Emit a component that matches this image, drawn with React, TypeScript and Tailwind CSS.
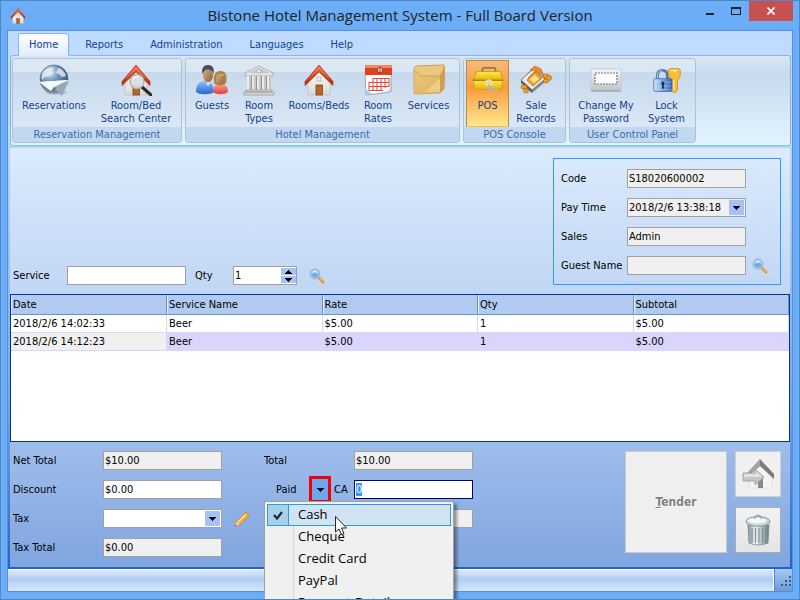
import { useEffect, useRef, useState } from "react";
import type { ReactNode } from "react";

interface RibbonItem {
  label: string[];
  icon: ReactNode;
  width: string;
}

interface RibbonGroup {
  title: string;
  items: RibbonItem[];
}

function GlobeIcon() {
  return (
    <svg viewBox="0 0 32 32" className="size-8">
      <defs>
        <radialGradient id="globe" cx="0.35" cy="0.25" r="0.8">
          <stop offset="0" stopColor="#dfeaf3" />
          <stop offset="0.45" stopColor="#6690b8" />
          <stop offset="1" stopColor="#2a4b73" />
        </radialGradient>
        <linearGradient id="plane" x1="0" y1="0" x2="1" y2="1">
          <stop offset="0" stopColor="#ffffff" />
          <stop offset="1" stopColor="#b9c6cc" />
        </linearGradient>
      </defs>
      <ellipse cx="18" cy="28" rx="11" ry="3" fill="#6b7785" opacity="0.3" />
      <circle cx="16" cy="15" r="14" fill="url(#globe)" stroke="#3a5877" strokeWidth="0.6" />
      <path d="M4 21q4 8 12 8 5 0 9-3l-8-6z" fill="#7d8b98" />
      <path d="M7 6c3-3 7-3 9-2l-2 3 2 2-4 3-5 1-3 3c-1-4 0-8 3-10zM20 4c4 1 7 4 8 8l-4 1-3-3-3-1z" fill="#e3ecf2" opacity="0.8" />
      <path d="M1 18 31 16 24 32 16 23z" fill="url(#plane)" />
      <path d="M1 18 31 16 16 23 13 27z" fill="#f8fbfc" />
      <path d="M16 23 31 16 24 32z" fill="#94a9b5" />
      <path d="M16 23 13 28 18 25z" fill="#5f6e79" />
    </svg>
  );
}

function HouseShape() {
  return (
    <>
      <defs>
        <linearGradient id="roof" x1="0" y1="0" x2="0" y2="1">
          <stop offset="0" stopColor="#f0623a" />
          <stop offset="1" stopColor="#b32708" />
        </linearGradient>
        <linearGradient id="wall" x1="0" y1="0" x2="0" y2="1">
          <stop offset="0" stopColor="#ffffff" />
          <stop offset="1" stopColor="#d8d8d6" />
        </linearGradient>
      </defs>
      <path d="M5 17 16 6l11 11v14H5z" fill="url(#wall)" stroke="#b8b8b8" strokeWidth="0.6" />
      <rect x="13" y="21" width="6.500" height="10" fill="#b5682a" stroke="#7e4316" strokeWidth="0.8" />
      <rect x="14" y="13" width="4" height="4" fill="#e8eef4" stroke="#a7a7a7" strokeWidth="0.7" />
      <path d="M16 1 30 17.500v4L16 8 2 21.500v-4z" fill="url(#roof)" stroke="#a32a0e" strokeWidth="0.6" />
      <path d="M16 2.500 28.500 17 16 5.500 3.500 17z" fill="#ff9067" opacity="0.6" />
    </>
  );
}

function HouseIcon({ className = "size-8" }: { className?: string }) {
  return (
    <svg viewBox="0 0 32 32" className={className}>
      <HouseShape />
    </svg>
  );
}

function HouseSearchIcon() {
  return (
    <svg viewBox="0 0 32 32" className="size-8">
      <HouseShape />
      <path d="m22 23 9 8" stroke="#2b2b2b" strokeWidth="3.200" strokeLinecap="round" />
      <circle cx="17" cy="17.500" r="7" fill="#d9e0e5" fillOpacity="0.95" stroke="#a9b0b5" strokeWidth="1.400" />
      <path d="M12 16a5.500 5.500 0 0 1 8-3.500c-3 0-6 1-8 3.500z" fill="#fff" />
    </svg>
  );
}

function GuestsIcon() {
  return (
    <svg viewBox="0 0 32 32" className="size-8">
      <defs>
        <linearGradient id="shirt" x1="0" y1="0" x2="0" y2="1">
          <stop offset="0" stopColor="#8ec1fb" />
          <stop offset="1" stopColor="#2464d4" />
        </linearGradient>
        <linearGradient id="blouse" x1="0" y1="0" x2="0" y2="1">
          <stop offset="0" stopColor="#ff9d94" />
          <stop offset="1" stopColor="#e03c3c" />
        </linearGradient>
        <linearGradient id="skin" x1="0" y1="0" x2="1" y2="1">
          <stop offset="0" stopColor="#d9b184" />
          <stop offset="1" stopColor="#8d633c" />
        </linearGradient>
      </defs>
      <path d="M0 28c0-7 3-11 9-11s9 4 9 11c-3 3-15 3-18 0z" fill="url(#shirt)" />
      <path d="m9 17 3 5 3-4z" fill="#dcebff" />
      <ellipse cx="12" cy="11" rx="5" ry="7.500" fill="url(#skin)" />
      <path d="M6.500 10C5 4 8 1 12 1s7 3 5.500 9c-1-3-2-4-5-4.500S8 7 6.500 10z" fill="#4a4e53" />
      <path d="M17 28c0-6 3-8 8-8s7 3 7 8c-3 3-12 3-15 0z" fill="url(#blouse)" />
      <path d="M18.500 20c-2-7 0-13 6-13s7 6 5.500 12c-3 3-8 3-11.500 1z" fill="#a98544" />
      <ellipse cx="24" cy="15.500" rx="4" ry="5.500" fill="url(#skin)" />
      <path d="M20 13c1-4 7-5 9-1-3 0-6-1-9 1z" fill="#c9a75f" />
    </svg>
  );
}

function BankIcon() {
  return (
    <svg viewBox="0 0 32 32" className="size-8">
      <path d="M2 9 16 2l14 7v3H2z" fill="#e1e1df" stroke="#a2a2a2" strokeWidth="0.8" />
      <path d="M6 9 16 4l10 5z" fill="#c4c4c2" />
      <circle cx="16" cy="7" r="1.800" fill="#f6f6f6" stroke="#999" strokeWidth="0.5" />
      <rect x="4" y="12" width="24" height="14" fill="#939393" />
      {[4, 9, 14, 19, 24].map((x) => (
        <g key={x}>
          <rect x={x} y="12" width="4" height="14" fill="#dadada" />
          <path d={`M${x + 1} 12v14`} stroke="#fafafa" />
          <path d={`M${x + 3} 12v14`} stroke="#b3b3b3" />
        </g>
      ))}
      <path d="M3 26h26v2H3zM1 28h30v3H1z" fill="#d6d6d4" stroke="#979797" strokeWidth="0.7" />
    </svg>
  );
}

function CalendarIcon() {
  return (
    <svg viewBox="0 0 32 32" className="size-8">
      <path d="M3 10h26v18L4 31z" fill="#fdfdfd" stroke="#8b9299" strokeWidth="0.8" />
      <path d="M3 2q0-1 1-1h25q1 0 1 1v9H3z" fill="#dd4120" />
      <path d="M3 2q0-1 1-1h25q1 0 1 1v2H3z" fill="#f08a62" />
      <circle cx="18" cy="6" r="2.800" fill="#f3c6b4" stroke="#8a2b12" strokeWidth="0.8" />
      <path d="M18 3v6" stroke="#8a2b12" strokeWidth="0.8" />
      <path d="M11 14.500h16M7 18.500h20M7 22.500h20M7 26.500h14M7 18v9M11 14v13M15 14v13M19 14v13M23 14v10M27 14v9" stroke="#e2473a" strokeWidth="1" fill="none" />
      <path d="m3 24 7 6-6 1z" fill="#9ed7f1" />
      <path d="M22 28c3 0 6-2 7-5v6z" fill="#c5cbd0" />
    </svg>
  );
}

function BoxIcon() {
  return (
    <svg viewBox="0 0 32 32" className="size-8">
      <defs>
        <linearGradient id="box" x1="0" y1="0" x2="1" y2="1">
          <stop offset="0" stopColor="#efca82" />
          <stop offset="1" stopColor="#dcae5a" />
        </linearGradient>
      </defs>
      <path d="M1 6q0-4 3-4l26-1q2 0 2 2l-1 22-4 4-25 1q-1 0-1-2z" fill="url(#box)" stroke="#c59a4d" strokeWidth="0.7" />
      <path d="M27 11 32 3l-1 22-4 4z" fill="#cf9f4d" />
      <path d="M1 5q1-3 3-3l26-1q2 0 1 3l-3 6q-1 2-3 2H8q-2 0-3-2L4 8H1z" fill="#ecc782" stroke="#c89a4b" strokeWidth="0.7" />
      <path d="M12 28 27 14v14z" fill="#f5db9f" opacity="0.6" />
    </svg>
  );
}

function CashBoxIcon() {
  return (
    <svg viewBox="0 0 34 32" className="h-8 w-8">
      <defs>
        <linearGradient id="cash" x1="0" y1="0" x2="0" y2="1">
          <stop offset="0" stopColor="#ffea51" />
          <stop offset="1" stopColor="#e6b400" />
        </linearGradient>
      </defs>
      <path d="M11 8V5q0-2 2-2h10q2 0 2 2v3" fill="none" stroke="#8b6f50" strokeWidth="1.800" />
      <path d="M5 7h25l3 9H1z" fill="url(#cash)" stroke="#b38a10" strokeWidth="0.7" />
      <path d="M1 16h32l-2 10H3z" fill="url(#cash)" stroke="#c29514" strokeWidth="0.7" />
      <path d="M1 16.500h32" stroke="#a78109" />
      <circle cx="18" cy="19" r="3" fill="none" stroke="#dcdce2" strokeWidth="1.800" />
      <path d="m18 21-1 7 3-1M19 22l6 6 2-2" fill="none" stroke="#b4b4bb" strokeWidth="1.800" />
    </svg>
  );
}

function SalesIcon() {
  return (
    <svg viewBox="0 1 32 32" className="size-8">
      <path d="m1 17 12-11 12 10-13 11z" fill="#e9e9e9" stroke="#6a6a6a" strokeWidth="0.9" />
      <path d="m1 17 11 10v3L1 20z" fill="#55595e" />
      <path d="m12 27 13-11v3L12 30z" fill="#84888c" />
      <path d="m7 17 8-8 7 6-9 8z" fill="#f9a62b" stroke="#b3620a" strokeWidth="0.8" />
      <path d="m10 16 5-4 4 4-5 4z" fill="#ffe08b" />
      <path d="m10 7 5-4 6 3 3 7-6-4z" fill="#f08c1a" stroke="#b35f09" strokeWidth="0.6" />
      <path d="m5 13 6-6M8 15l6-6" stroke="#9c9c9c" />
      <g fill="#f0a12a" stroke="#b0660d" strokeWidth="0.7">
        <ellipse cx="26" cy="13" rx="3" ry="2" />
        <ellipse cx="29" cy="15" rx="2.500" ry="2.500" />
        <ellipse cx="26" cy="18" rx="2.500" ry="2" />
        <ellipse cx="4" cy="24" rx="3" ry="2" />
        <ellipse cx="6" cy="28" rx="2.500" ry="2" />
      </g>
    </svg>
  );
}

function PasswordIcon() {
  return (
    <svg viewBox="0 0 32 32" className="size-8">
      <defs>
        <linearGradient id="pwd" x1="0" y1="0" x2="0" y2="1">
          <stop offset="0" stopColor="#f6f6f6" />
          <stop offset="1" stopColor="#bfc2c6" />
        </linearGradient>
      </defs>
      <rect x="1" y="5" width="30" height="22" rx="1" fill="url(#pwd)" stroke="#c5c8cb" strokeWidth="0.8" />
      <path d="M1 27h30" stroke="#8f9499" />
      <rect x="5" y="9" width="22" height="11" fill="#fdfdfd" stroke="#77797c" strokeWidth="1.200" strokeDasharray="2 1" />
    </svg>
  );
}

function LockIcon() {
  return (
    <svg viewBox="-1 -1 35 35" className="size-8">
      <defs>
        <linearGradient id="lock" x1="0" y1="0" x2="1" y2="0">
          <stop offset="0" stopColor="#d4e5f8" />
          <stop offset="0.5" stopColor="#7ba6dd" />
          <stop offset="1" stopColor="#3668b4" />
        </linearGradient>
      </defs>
      <path d="M6 16V12q0-6 5.500-6T17 12v4" fill="none" stroke="#547baf" strokeWidth="3.200" />
      <path d="M6 15V12q0-5.500 5.500-5.500" fill="none" stroke="#c2d8f1" strokeWidth="1" />
      <rect x="2" y="15" width="20" height="14" rx="1" fill="url(#lock)" stroke="#3b67a4" strokeWidth="0.8" />
      <path d="M3 19h18M3 23h18M3 27h18" stroke="#b9d2ef" opacity="0.5" />
      <circle cx="12" cy="20" r="1.800" fill="#172e58" />
      <path d="M11 20h2v6h-2z" fill="#172e58" />
      <path d="M18 6q0-2 3-2h8q2 0 2 2v5q0 4-3 5v11l-2 3h-3V16q-3-1-5-4z" fill="#f6bd35" stroke="#c98a14" strokeWidth="0.8" />
      <path d="M20 6h9M24 16v12" stroke="#ffe591" strokeWidth="1.500" />
      <circle cx="25" cy="7" r="1.200" fill="#fff" />
    </svg>
  );
}

function SearchIcon() {
  return (
    <svg viewBox="0 0 16 16" className="size-4">
      <path d="m10 10 4 4" stroke="#d8963a" strokeWidth="3" strokeLinecap="round" />
      <path d="m10 9.500 4 4" stroke="#f7cf86" strokeWidth="1" strokeLinecap="round" />
      <circle cx="6" cy="6" r="4.800" fill="#a9d0f7" stroke="#9fb2ca" strokeWidth="1.200" />
      <path d="M2.500 6q3.500-2 7 0-.5 3.500-3.500 3.500T2.500 6z" fill="#6ea9ea" />
      <path d="M3 4.500q3-3 6 0-3-1-6 0z" fill="#f1f8ff" />
    </svg>
  );
}

function PencilIcon() {
  return (
    <svg viewBox="0 0 16 16" className="size-4">
      <path d="M2 11 11 2q1.500-1 3 .5t.5 3L5.500 14 1 15z" fill="#f9ad3d" stroke="#bd7a2a" strokeWidth="0.7" />
      <path d="m3 11 8-8 1.200 1L4 12z" fill="#ffdf96" />
      <path d="M2 11q2 0 3.500 3L1 15z" fill="#f1d3b4" />
      <path d="m1.500 13.500 1 1L1 15z" fill="#333" />
      <path d="m11 2 3.500 3.500" stroke="#e89a6a" strokeWidth="1" />
    </svg>
  );
}

function LeaveIcon() {
  return (
    <svg viewBox="0 0 32 32" className="size-8">
      <path d="M7 15 18 5l12 12v13H7z" fill="#f4f4f4" stroke="#d8d8d8" strokeWidth="0.7" />
      <path d="M16 19h5v11h-5z" fill="#8a8a8a" />
      <path d="M18 1 32 16v5L18 8 7 17z" fill="#7b7b7b" />
      <path d="M18 1 5 15l2 2L18 8z" fill="#a2a2a2" />
      <path d="M1 15h12v-4l9 8-9 8v-4H1z" fill="#c6c6c6" stroke="#9a9a9a" strokeWidth="0.8" />
      <path d="M2 16h12v-3l6 6H2z" fill="#e2e2e2" />
    </svg>
  );
}

function TrashIcon() {
  return (
    <svg viewBox="0 0 32 32" className="size-8">
      <defs>
        <linearGradient id="bin" x1="0" y1="0" x2="1" y2="0">
          <stop offset="0" stopColor="#7e8e96" />
          <stop offset="0.35" stopColor="#f2f6f7" />
          <stop offset="0.7" stopColor="#a9b9bf" />
          <stop offset="1" stopColor="#66777f" />
        </linearGradient>
      </defs>
      <path d="M6 11h21l-1 18q-10 4-19 0z" fill="url(#bin)" stroke="#7b8a91" strokeWidth="0.8" />
      <path d="M10 14v14M13.500 14v15M17 14v15M20.500 14v15M23.500 14v14" stroke="#84939a" strokeWidth="1.200" />
      <ellipse cx="16" cy="7.500" rx="12" ry="4.800" fill="#cbd6da" stroke="#7b8a91" strokeWidth="0.9" />
      <ellipse cx="15" cy="6.500" rx="9.500" ry="3" fill="#f3f7f8" />
      <path d="M12.500 5q0-3.500 3.500-3.500T19.500 5" fill="none" stroke="#9aa8ae" strokeWidth="1.400" />
    </svg>
  );
}

function Caret({ up = false }: { up?: boolean }) {
  return (
    <svg viewBox="0 0 7 4" className="h-1 w-[7px]" shapeRendering="crispEdges">
      <path d={up ? "M0 4h7L3.500 0z" : "M0 0h7L3.500 4z"} fill="#000" />
    </svg>
  );
}

const groups: RibbonGroup[] = [
  {
    title: "Reservation Management",
    items: [
      { label: ["Reservations"], icon: <GlobeIcon />, width: "w-[78px]" },
      { label: ["Room/Bed", "Search Center"], icon: <HouseSearchIcon />, width: "w-[86px]" },
    ],
  },
  {
    title: "Hotel Management",
    items: [
      { label: ["Guests"], icon: <GuestsIcon />, width: "w-12" },
      { label: ["Room", "Types"], icon: <BankIcon />, width: "w-[46px]" },
      { label: ["Rooms/Beds"], icon: <HouseIcon />, width: "w-[74px]" },
      { label: ["Room", "Rates"], icon: <CalendarIcon />, width: "w-11" },
      { label: ["Services"], icon: <BoxIcon />, width: "w-[57px]" },
    ],
  },
  {
    title: "POS Console",
    items: [
      { label: ["POS"], icon: <CashBoxIcon />, width: "w-[43px]" },
      { label: ["Sale", "Records"], icon: <SalesIcon />, width: "w-[54px]" },
    ],
  },
  {
    title: "User Control Panel",
    items: [
      { label: ["Change My", "Password"], icon: <PasswordIcon />, width: "w-[68px]" },
      { label: ["Lock", "System"], icon: <LockIcon />, width: "w-[53px]" },
    ],
  },
];

const tabs = ["Home", "Reports", "Administration", "Languages", "Help"];
const payments = ["Cash", "Cheque", "Credit Card", "PayPal", "Payment Details"];
const columns = ["Date", "Service Name", "Rate", "Qty", "Subtotal"];
const sales = [
  ["2018/2/6 14:02:33", "Beer", "$5.00", "1", "$5.00"],
  ["2018/2/6 14:12:23", "Beer", "$5.00", "1", "$5.00"],
];

const field = "h-[19px] w-[119px] border border-[#a0a0a0] px-px outline-none";

function TitleBar() {
  return (
    <header className="flex h-[29px] shrink-0 items-start">
      <div className="w-24 pt-[7px] pl-[3px]">
        <HouseIcon className="size-4" />
      </div>
      <h1 className="flex-1 pt-[3px] text-center font-[family-name:'Open_Sans',sans-serif] text-[15px] leading-[22px] whitespace-nowrap text-[#222]">
        Bistone Hotel Management System - Full Board Version
      </h1>
      <div className="flex w-24 justify-end">
        <button type="button" aria-label="Minimize" className="flex h-5 w-[27px] items-end justify-center pb-[6px]">
          <span className="h-[2px] w-2 bg-[#222]" />
        </button>
        <button type="button" aria-label="Maximize" className="flex h-5 w-[27px] items-end justify-center pb-[6px]">
          <span className="h-2 w-[10px] border border-t-2 border-[#222]" />
        </button>
        <button type="button" aria-label="Close" className="flex h-5 w-[45px] items-center justify-center bg-[#c75050]">
          <svg viewBox="0 0 8 8" className="size-2">
            <path d="m0.500 0.500 7 7M7.500 0.500l-7 7" stroke="#fff" strokeWidth="1.700" />
          </svg>
        </button>
      </div>
    </header>
  );
}

function Ribbon() {
  const [tab, setTab] = useState("Home");
  const [active, setActive] = useState("POS");

  return (
    <div className="shrink-0 bg-[#bfdbff] pr-px pb-px pl-[2px] text-[#15428b]">
      <nav className="flex h-6 items-end gap-[5px] px-2">
        {tabs.map((t) => (
          <button
            key={t}
            type="button"
            onClick={() => setTab(t)}
            className={
              t === tab
                ? "relative -mb-px h-[23px] rounded-t-[3px] border border-b-0 border-[#8db2e3] bg-linear-to-b from-white to-[#e2edf8] px-[10px] shadow-[1px_0_1px_#9fe3ee]"
                : "h-[21px] px-[11px]"
            }
          >
            {t}
          </button>
        ))}
      </nav>
      <div className="flex h-[91px] gap-[3px] rounded-[3px] border border-[#8db2e3] border-b-[#7fc6d6] bg-linear-to-b from-[#d9e6f4] via-[#c9d9ee] via-20% to-[#e3f4ff] px-px py-[2px] shadow-[0_1px_0_#a7d8ee]">
        {groups.map((g) => (
          <section key={g.title} className="flex flex-col rounded-[3px] border border-[#a9c3dc] bg-linear-to-b from-[#dce7f4] from-15% via-[#c8d9ed] via-16% to-[#dfebf8]">
            <div className="flex flex-1 px-[2px] pt-px">
              {g.items.map((item) => (
                <button
                  key={item.label.join(" ")}
                  type="button"
                  onClick={() => setActive(item.label[0])}
                  className={`${item.width} flex flex-col items-center border pt-[3px] leading-[13px] whitespace-nowrap ${
                    item.label[0] === active
                      ? "border-[#b98b45] border-b-[#f5c02d] bg-linear-to-b from-[#f5bb78] via-[#fb9a3b] via-40% to-[#ffe78c]"
                      : "border-transparent"
                  }`}
                >
                  {item.icon}
                  <span className="mt-[3px]">{item.label[0]}</span>
                  {item.label[1] && <span>{item.label[1]}</span>}
                </button>
              ))}
            </div>
            <h2 className="h-[15px] rounded-b-[2px] bg-[#c1d8f0] text-center leading-[15px] text-[#3e6aaa]">{g.title}</h2>
          </section>
        ))}
      </div>
    </div>
  );
}

function SaleHeader() {
  return (
    <div className="flex shrink-0 items-end justify-between pr-[9px] pb-[9px] pl-[3px]">
      <form className="flex items-center">
        <label htmlFor="service" className="w-[54px]">Service</label>
        <input id="service" className={`${field} bg-white`} />
        <label htmlFor="qty" className="w-[47px] pl-[9px]">Qty</label>
        <div className="flex h-[19px] w-16 border border-[#a0a0a0] bg-white">
          <input id="qty" defaultValue="1" className="w-full min-w-0 px-px outline-none" />
          <div className="flex w-[15px] shrink-0 flex-col gap-px py-px">
            <button type="button" aria-label="Increase" className="flex flex-1 items-center justify-center bg-[#a4c2f7]"><Caret up /></button>
            <button type="button" aria-label="Decrease" className="flex flex-1 items-center justify-center bg-[#a4c2f7]"><Caret /></button>
          </div>
        </div>
        <button type="button" aria-label="Find service" className="ml-3"><SearchIcon /></button>
      </form>

      <div className="mt-[10px] grid w-[228px] grid-cols-[66px_119px_auto] items-center gap-y-[10px] border border-[#3399ff] px-[7px] pt-[10px] pb-[9px]">
        <label htmlFor="code">Code</label>
        <input id="code" readOnly value="S18020600002" className={`${field} col-span-2 bg-[#f0f0f0]`} />
        <label htmlFor="pay-time">Pay Time</label>
        <div className="relative col-span-2 h-[19px] w-[119px]">
          <select id="pay-time" className={`${field} appearance-none bg-[#f0f0f0]`}>
            <option>2018/2/6 13:38:18</option>
          </select>
          <span className="pointer-events-none absolute inset-y-[2px] right-[2px] flex w-[15px] items-center justify-center bg-[#a4c2f7]"><Caret /></span>
        </div>
        <label htmlFor="sales">Sales</label>
        <input id="sales" readOnly value="Admin" className={`${field} col-span-2 bg-[#f0f0f0]`} />
        <label htmlFor="guest">Guest Name</label>
        <input id="guest" readOnly value="" className={`${field} bg-[#f0f0f0]`} />
        <button type="button" aria-label="Find guest" className="-my-1 ml-[6px]"><SearchIcon /></button>
      </div>
    </div>
  );
}

function SalesTable() {
  return (
    <div className="min-h-0 flex-1 border border-[#003399] bg-white">
      <table className="w-full table-fixed text-left">
        <thead>
          <tr className="h-[19px] bg-[#b0cbef]">
            {columns.map((c) => (
              <th key={c} className="border-r border-b border-[#6593cf] px-[2px] pt-[2px] font-normal shadow-[inset_1px_0_0_#e3eefb]">{c}</th>
            ))}
          </tr>
        </thead>
        <tbody>
          {sales.map((row, i) => (
            <tr key={row[0]} className={i % 2 ? "h-[18px] bg-[#d9d5fd]" : "h-[18px] bg-white"}>
              {row.map((cell, j) => (
                <td key={columns[j]} className={`border-r border-b border-[#d9d5fd] px-[2px] pt-px ${i % 2 && j === 0 ? "bg-[#f0f0f0]" : ""}`}>{cell}</td>
              ))}
            </tr>
          ))}
        </tbody>
      </table>
    </div>
  );
}

function PaymentMenu() {
  const [method, setMethod] = useState("Cash");

  return (
    <ul role="menu" className="absolute top-[21px] -left-[45px] z-10 w-[190px] border border-[#a0a0a0] bg-[#f0f0f0] p-[2px] font-[family-name:'Open_Sans',sans-serif] text-[13px] shadow-[3px_3px_3px_rgba(0,0,0,0.4)]">
      {payments.map((p) => (
        <li key={p} role="none">
          <button
            type="button"
            role="menuitemradio"
            aria-checked={p === method}
            onClick={() => setMethod(p)}
            className={`flex h-[22px] w-full items-center border ${p === method ? "border-[#26a0da] bg-[#d1e2f2]" : "border-transparent"}`}
          >
            <span className={`flex h-full w-[21px] shrink-0 items-center justify-center ${p === method ? "border-r border-[#26a0da] bg-[#a6d1ea]" : ""}`}>
              {p === method && (
                <svg viewBox="0 0 10 9" className="h-[9px] w-[10px]">
                  <path d="m1 4 3 3.500L9 1" fill="none" stroke="#1c2a33" strokeWidth="2.200" />
                </svg>
              )}
            </span>
            <span className={`ml-1 h-[22px] border-l pl-1 leading-[21px] ${p === method ? "border-transparent" : "border-[#d7d7d7]"}`}>{p}</span>
          </button>
        </li>
      ))}
    </ul>
  );
}

function Pointer() {
  return (
    <svg viewBox="0 0 12 19" className="pointer-events-none absolute top-9 left-[26px] z-20 h-[19px] w-3">
      <path d="M0.500 0.500v15.500l3.500-3 2.500 5.500 2.500-1-2.500-5.500h5z" fill="#fff" stroke="#111" strokeWidth="0.9" />
    </svg>
  );
}

function Totals() {
  const paid = useRef<HTMLInputElement>(null);

  useEffect(() => {
    paid.current?.focus();
    paid.current?.select();
  }, []);

  return (
    <div className="flex shrink-0 pt-[9px] pr-[9px] pb-[10px] pl-[3px]">
      <div className="grid h-fit grid-cols-[90px_119px_auto] items-center gap-y-[10px]">
        <label htmlFor="net">Net Total</label>
        <input id="net" readOnly value="$10.00" className={`${field} col-span-2 bg-[#f0f0f0]`} />
        <label htmlFor="discount">Discount</label>
        <input id="discount" defaultValue="$0.00" className={`${field} col-span-2 bg-white`} />
        <label htmlFor="tax">Tax</label>
        <div className="relative h-[19px] w-[119px]">
          <select id="tax" className={`${field} appearance-none bg-white`}>
            <option></option>
          </select>
          <span className="pointer-events-none absolute inset-y-[2px] right-[2px] flex w-[15px] items-center justify-center bg-[#a4c2f7]"><Caret /></span>
        </div>
        <button type="button" aria-label="Edit tax" className="-my-1 ml-3"><PencilIcon /></button>
        <label htmlFor="tax-total">Tax Total</label>
        <input id="tax-total" readOnly value="$0.00" className={`${field} col-span-2 bg-[#f0f0f0]`} />
      </div>

      <div className="ml-[14px] grid h-fit grid-cols-[90px_119px] items-center gap-y-[10px]">
        <label htmlFor="total">Total</label>
        <input id="total" readOnly value="$10.00" className={`${field} bg-[#f0f0f0]`} />
        <div className="flex h-[19px] items-center">
          <label htmlFor="paid" className="w-[45px] pl-3">Paid</label>
          <div className="relative">
            <button type="button" aria-label="Payment method" className="-my-1 flex h-[27px] w-[22px] items-center justify-center border-3 border-[#f00008] bg-[#6ca6ee]"><Caret /></button>
            <PaymentMenu />
            <Pointer />
          </div>
          <span className="pl-[3px]">CA</span>
        </div>
        <input id="paid" ref={paid} defaultValue="0" className="h-[19px] w-[119px] border border-[#000080] bg-white px-px outline-none selection:bg-[#3399ff] selection:text-white" />
        <input id="change" aria-label="Change" readOnly value="" className={`${field} col-start-2 bg-[#f0f0f0]`} />
      </div>

      <div className="ml-auto flex h-[102px] gap-2">
        <button type="button" className="w-[102px] border border-[#c9c9c9] bg-[#efefef] font-[family-name:'DejaVu_Sans_Condensed',sans-serif] text-xs font-bold text-[#808080] [text-shadow:1px_1px_0_#fff]">
          <span className="underline">T</span>ender
        </button>
        <div className="flex flex-col justify-between">
          <button type="button" aria-label="Check out" className="flex size-[46px] items-center justify-center border border-[#d0d0d0] bg-[#f0f0f0]"><LeaveIcon /></button>
          <button type="button" aria-label="Delete" className="flex size-[46px] items-center justify-center border border-[#adadad] bg-linear-to-b from-[#f2f2f2] to-[#e4e4e4]"><TrashIcon /></button>
        </div>
      </div>
    </div>
  );
}

function StatusBar() {
  return (
    <footer className="flex h-[22px] shrink-0 bg-linear-to-b from-[#e3efff] via-[#b0cdf2] via-45% to-[#d6e6fa] shadow-[inset_0_1px_0_#fff]">
      <div className="ml-auto flex w-[18px] items-end justify-end border-l border-[#5382bf] bg-linear-to-b from-[#a7c8f0] to-[#6f9bd8] pb-1 shadow-[-1px_0_0_#fff]">
        <svg viewBox="0 0 12 12" className="size-3" shapeRendering="crispEdges">
          <path d="M9 1h2v2H9zM9 5h2v2H9zM5 5h2v2H5zM9 9h2v2H9zM5 9h2v2H5zM1 9h2v2H1z" fill="#3c5a8c" />
        </svg>
      </div>
    </footer>
  );
}

export default function App() {
  return (
    <div className="flex h-screen flex-col overflow-hidden border border-[#4f86c6] bg-[#6badf6] px-[6px] pb-[7px] font-[family-name:'DejaVu_Sans_Condensed','Noto_Sans',sans-serif] text-[11px] leading-[14px] text-black">
      <TitleBar />
      <div className="flex min-h-0 flex-1 flex-col border border-[#5590d6]">
        <Ribbon />
        <div className="flex min-h-0 flex-1 flex-col bg-linear-to-b from-[#b9d3f6] via-[#7ea6e4] via-60% to-[#2560cb] px-[2px] pt-px pb-[2px]">
          <main className="flex min-h-0 flex-1 flex-col bg-linear-to-b from-[#dcebfc] via-[#b4cdf1] via-50% to-[#80a6e0]">
            <SaleHeader />
            <SalesTable />
            <Totals />
          </main>
        </div>
        <StatusBar />
      </div>
    </div>
  );
}
